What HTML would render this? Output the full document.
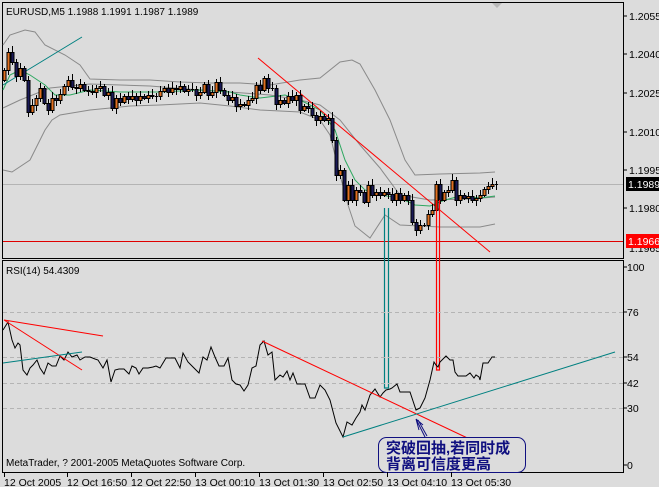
<!DOCTYPE html>
<html><head><meta charset="utf-8"><style>
html,body{margin:0;padding:0;background:#dcdcdc;}
svg{display:block;font-family:"Liberation Sans","Noto Sans CJK SC",sans-serif;}
</style></head><body>
<svg id="s" width="659" height="487" viewBox="0 0 659 487" xmlns="http://www.w3.org/2000/svg">
<rect width="659" height="487" fill="#dcdcdc"/>
<rect x="2.5" y="2.5" width="621" height="256" fill="none" stroke="#000"/>
<rect x="2.5" y="260.5" width="621" height="212" fill="none" stroke="#000"/>
<line x1="3" y1="184.5" x2="623" y2="184.5" stroke="#b4b4b4"/>
<line x1="3" y1="241.5" x2="623" y2="241.5" stroke="#e00000"/>
<polygon points="492,3 502,3 497,8" fill="#b8b8b8"/>
<g fill="none" stroke="#8a8a8a" stroke-width="1">
<polyline points="3,45 10,35 25,30 35,32 45,45 65,55 80,65 90,79 120,80 150,80 180,82 210,83 240,83 270,85 300,80 320,78 340,62 352,60 360,64 375,90 390,120 405,160 415,175 440,174 480,173 495,172"/>
<polyline points="3,170 12,172 30,160 45,130 52,120 60,115 90,110 130,106 160,105 200,103 230,106 260,110 300,112 320,120 330,135 340,175 348,205 355,226 370,238 385,215 400,225 440,227 480,227 495,224"/>
<polyline points="3,108 20,100 50,88 90,84 150,86 200,90 230,92 270,95 300,100 320,105 340,120 360,145 380,168 400,195 430,200 470,199 495,197"/>
</g>
<polyline fill="none" stroke="#2ea860" points="3,90 10,75 20,70 30,75 45,85 55,95 70,95 90,90 120,92 160,92 200,90 230,92 240,95 260,98 285,95 300,100 320,110 335,130 345,160 355,180 365,190 380,195 400,198 415,205 430,206 445,200 460,196 480,198 495,196"/>
<line x1="3" y1="85" x2="82" y2="37" stroke="#008080"/>
<line x1="258" y1="58" x2="490" y2="252" stroke="#ff0000"/>
<g id="candles"></g>
<path d="M384.5 208 V388 H388.5 V208" fill="none" stroke="#008080" stroke-width="1.2"/>
<path d="M436.5 200 V370 H439.5 V200" fill="none" stroke="#ff0000" stroke-width="1.2"/>
<g stroke="#b4b4b4" stroke-dasharray="4,3">
<line x1="3" y1="312.5" x2="623" y2="312.5"/><line x1="3" y1="357.5" x2="623" y2="357.5"/>
<line x1="3" y1="383.5" x2="623" y2="383.5"/><line x1="3" y1="408.5" x2="623" y2="408.5"/>
</g>
<polyline fill="none" stroke="#000" stroke-width="1" points="3,330 8,322 12,340 15,348 18,343 20,345 23,370 27,375 30,368 33,365 37,360 40,368 44,374 48,363 52,366 56,366 60,356 64,360 68,352 72,357 77,355 80,360 85,357 90,357 95,359 98,360 103,368 107,360 111,382 115,370 119,369 124,369 129,374 132,366 136,368 139,374 143,368 148,368 153,367 156,366 160,368 166,358 172,358 175,358 180,368 183,353 188,362 193,367 199,373 203,357 207,360 211,347 215,357 219,366 224,366 228,358 232,380 236,384 240,385 244,391 248,385 252,368 256,366 260,345 264,341 268,355 272,352 275,380 280,375 283,377 287,371 290,380 293,373 297,384 305,384 310,398 315,398 320,385 325,390 330,400 336,423 343,437 347,422 352,425 356,418 360,412 362,405 365,410 370,395 375,389 380,397 383,393 386,390 390,389 392,388 397,384 400,392 406,392 410,392 413,401 416,410 420,408 425,398 430,380 434,362 436,365 438,367 440,362 446,356 450,360 453,360 455,372 458,376 466,376 470,373 474,378 476,375 479,377 480,380 483,363 488,363 492,357 495,357"/>
<g stroke="#ff0000" fill="none">
<line x1="4" y1="320" x2="103" y2="336"/><line x1="4" y1="320" x2="82" y2="370"/>
<line x1="262" y1="341" x2="478" y2="443"/>
</g>
<g stroke="#008080"><line x1="3" y1="363" x2="82" y2="352"/><line x1="343" y1="437" x2="615" y2="352"/></g>
<rect x="378.5" y="437.5" width="147" height="35" rx="8" fill="#dcdcdc" stroke="#101080"/>
<path d="M416 419 L425 437 M416 419 L419 430 M416 419 L423 425 M418 420 L427 436" stroke="#101080" fill="none"/>
<text x="386" y="453" font-size="15" font-weight="bold" fill="#101080">突破回抽,若同时成</text>
<text x="386" y="469" font-size="15" font-weight="bold" fill="#101080">背离可信度更高</text>
<g font-size="10" fill="#000">
<text x="6" y="15">EURUSD,M5  1.1988 1.1991 1.1987 1.1989</text>
<text x="6" y="274">RSI(14) 54.4309</text>
<text x="6" y="466">MetaTrader, ? 2001-2005 MetaQuotes Software Corp.</text>
</g>
<g font-size="10.5" fill="#000">
<text x="629" y="20">1.2055</text><text x="629" y="58">1.2040</text><text x="629" y="97">1.2025</text>
<text x="629" y="136">1.2010</text><text x="629" y="174">1.1995</text><text x="629" y="212">1.1980</text>
<text x="629" y="252">1.1965</text>
<text x="627" y="271">100</text><text x="627" y="316">76</text><text x="627" y="361">54</text>
<text x="627" y="387">42</text><text x="627" y="412">30</text><text x="627" y="469">0</text>
</g>
<g stroke="#000">
<line x1="623" y1="16" x2="627" y2="16"/><line x1="623" y1="54" x2="627" y2="54"/><line x1="623" y1="93" x2="627" y2="93"/>
<line x1="623" y1="132" x2="627" y2="132"/><line x1="623" y1="170" x2="627" y2="170"/><line x1="623" y1="208" x2="627" y2="208"/>
<line x1="623" y1="267" x2="627" y2="267"/><line x1="623" y1="312" x2="627" y2="312"/><line x1="623" y1="357" x2="627" y2="357"/>
<line x1="623" y1="383" x2="627" y2="383"/><line x1="623" y1="408" x2="627" y2="408"/><line x1="623" y1="465" x2="627" y2="465"/>
</g>
<rect x="626" y="177" width="33" height="14" fill="#000"/>
<text x="628" y="188" font-size="10.5" fill="#fff">1.1989</text>
<rect x="626" y="234" width="33" height="14" fill="#ff0000"/>
<text x="628" y="245" font-size="10.5" fill="#fff">1.1966</text>
<g stroke="#000">
<line x1="4.5" y1="472" x2="4.5" y2="477"/><line x1="67.5" y1="472" x2="67.5" y2="477"/><line x1="131.5" y1="472" x2="131.5" y2="477"/>
<line x1="195.5" y1="472" x2="195.5" y2="477"/><line x1="259.5" y1="472" x2="259.5" y2="477"/><line x1="323.5" y1="472" x2="323.5" y2="477"/>
<line x1="387.5" y1="472" x2="387.5" y2="477"/><line x1="451.5" y1="472" x2="451.5" y2="477"/>
</g>
<g font-size="10.5" fill="#000">
<text x="4" y="486">12 Oct 2005</text><text x="67" y="486">12 Oct 16:50</text><text x="131" y="486">12 Oct 22:50</text>
<text x="195" y="486">13 Oct 00:10</text><text x="259" y="486">13 Oct 01:30</text><text x="323" y="486">13 Oct 02:50</text>
<text x="387" y="486">13 Oct 04:10</text><text x="451" y="486">13 Oct 05:30</text>
</g>
</svg>
<script>
var c=[70,52,62,76,68,80,112,105,98,88,103,110,98,100,94,86,80,87,88,84,90,91,92,88,86,95,92,108,98,102,96,99,96,100,96,98,95,96,96,91,88,92,88,89,86,91,89,89,95,92,84,95,92,82,90,95,100,97,106,104,105,100,98,85,90,78,88,88,104,100,103,96,100,95,110,106,108,115,120,116,120,118,140,175,170,200,185,200,190,192,202,185,195,192,195,192,194,200,193,200,195,200,222,230,225,225,214,210,184,200,192,190,180,200,195,198,196,200,198,195,189,186,184,184];
var g=document.getElementById('candles'),h='',prev=80;
for(var i=0;i<c.length;i++){var x=4+4*i,o=prev,cl=c[i];var t=Math.min(o,cl),b=Math.max(o,cl);
var hi=t-2-(i*7%5),lo=b+2+(i*3%5);
h+='<line x1="'+(x+.5)+'" y1="'+hi+'" x2="'+(x+.5)+'" y2="'+lo+'" stroke="#000"/>';
if(b-t<1){h+='<line x1="'+(x-1)+'" y1="'+(t+.5)+'" x2="'+(x+2)+'" y2="'+(t+.5)+'" stroke="#000"/>';}
else h+='<rect x="'+(x-1)+'" y="'+(t+.5)+'" width="3" height="'+(b-t)+'" fill="'+(cl<o?'#e07020':'#1a1a58')+'" stroke="#000" stroke-width="1"/>';
prev=cl;}
g.innerHTML=h;
</script>
</body></html>
